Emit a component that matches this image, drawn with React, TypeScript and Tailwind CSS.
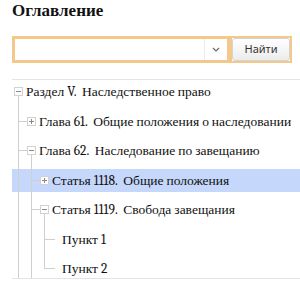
import React from 'react';

type Row = {
  label: string;
  level: number;
  kind: 'plus' | 'minus' | 'leaf';
  last: boolean;
  cont: boolean[];
  selected?: boolean;
};

const rows: Row[] = [
  { label: 'Раздел V.  Наследственное право', level: 0, kind: 'minus', last: false, cont: [] },
  { label: 'Глава 61.  Общие положения о наследовании', level: 1, kind: 'plus', last: false, cont: [] },
  { label: 'Глава 62.  Наследование по завещанию', level: 1, kind: 'minus', last: false, cont: [] },
  { label: 'Статья 1118.  Общие положения', level: 2, kind: 'plus', last: false, cont: [true], selected: true },
  { label: 'Статья 1119.  Свобода завещания', level: 2, kind: 'minus', last: false, cont: [true] },
  { label: 'Пункт 1', level: 3, kind: 'leaf', last: false, cont: [true, true] },
  { label: 'Пункт 2', level: 3, kind: 'leaf', last: true, cont: [true, true] },
];

const LINE = '#cfcfcf';

const Connectors = ({ row, h }: { row: Row; h: number }) => {
  const L = row.level;
  const w = row.kind === 'leaf' ? 13 * L + 10 : 13 * L + 13;
  const cx = (k: number) => 13 * k + 6.5;
  return (
    <svg width={w} height={h} className="shrink-0">
      {row.cont.map((c, j) =>
        c ? <line key={j} x1={cx(j)} y1={0} x2={cx(j)} y2={h} stroke={LINE} /> : null
      )}
      {L > 0 && (
        <>
          <line x1={cx(L - 1)} y1={0} x2={cx(L - 1)} y2={row.last ? 12 : h} stroke={LINE} />
          <line
            x1={cx(L - 1)}
            y1={11.5}
            x2={row.kind === 'leaf' ? 13 * L + 4 : 13 * L + 2}
            y2={11.5}
            stroke={LINE}
          />
        </>
      )}
      {row.kind === 'minus' && <line x1={cx(L)} y1={16} x2={cx(L)} y2={h} stroke={LINE} />}
      {row.kind !== 'leaf' && (
        <>
          <rect x={13 * L + 2.5} y={7.5} width={8} height={8} fill="#fff" stroke="#d2d2d2" />
          <line x1={13 * L + 4} y1={11.5} x2={13 * L + 9} y2={11.5} stroke="#8a8a8a" />
          {row.kind === 'plus' && (
            <line x1={cx(L)} y1={9} x2={cx(L)} y2={14} stroke="#8a8a8a" />
          )}
        </>
      )}
    </svg>
  );
};

const App = () => {
  return (
    <div className="w-[300px] h-[286px] overflow-hidden bg-white font-serif">
      <h2 className="ml-3 pt-[1px] font-serif text-[17px] leading-[20px] font-bold text-[#111]">
        Оглавление
      </h2>

      <div className="ml-3 mt-[15px] flex h-[27px] w-[280px]">
        <div className="flex w-[218px] border-[3px] border-[#f3c88a] bg-white">
          <input className="min-w-0 flex-1 bg-white px-1 text-[12px] outline-none" />
          <div className="flex w-[23px] items-center justify-center border-l border-[#ececec]">
            <svg width="8" height="5" viewBox="0 0 8 5">
              <path d="M1 1l3 3 3-3" fill="none" stroke="#6b6b6b" strokeWidth="1.2" />
            </svg>
          </div>
        </div>
        <div className="flex w-[62px] border-[2px] border-[#f3c88a]">
          <button className="flex-1 rounded-[3px] border border-[#d4d4d4] bg-gradient-to-b from-white to-[#ececec] font-sans text-[11px] text-[#333]">
            Найти
          </button>
        </div>
      </div>

      <div className="ml-3 mt-[16px] h-[200px] overflow-hidden border-y border-[#e4e4e4]">
        {rows.map((row, i) => {
          const h = i % 2 === 0 ? 30 : 29;
          return (
            <div
              key={i}
              className={
                'flex items-start ' +
                (i % 2 === 0 ? 'h-[30px] ' : 'h-[29px] ') +
                (row.selected
                  ? 'bg-[linear-gradient(to_bottom,#c5d7fa_0px,#c5d7fa_23px,transparent_23px)]'
                  : '')
              }
            >
              <Connectors row={row} h={h} />
              <span className="ml-[1px] whitespace-pre font-serif text-[13.5px] leading-[23px] text-[#111]">
                {row.label}
              </span>
            </div>
          );
        })}
      </div>
    </div>
  );
};

export default App;
